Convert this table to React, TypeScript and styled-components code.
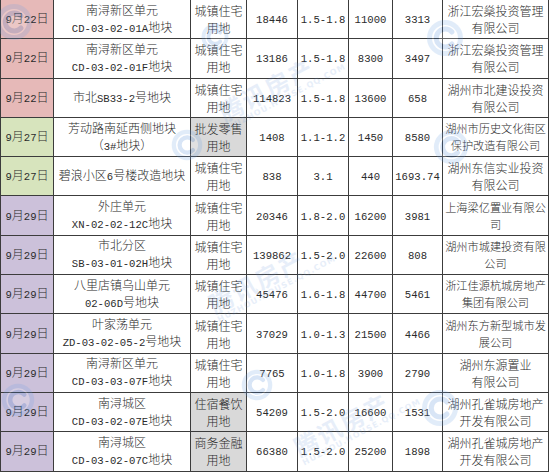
import React from 'react';
import styled, { createGlobalStyle } from 'styled-components';

const GlobalStyle = createGlobalStyle`
  html, body {
    margin: 0;
    padding: 0;
    background: #fff;
  }
  body {
    font-family: "Noto Sans CJK SC", "DejaVu Sans", sans-serif;
  }
`;

type Group = 'pink' | 'green' | 'purple';

const groupColors: Record<Group, string> = {
  pink: '#e6b9b8',
  green: '#d7e4bd',
  purple: '#ccc1da',
};

interface LandRow {
  date: string;
  group: Group;
  plot: string[];
  use: string[];
  useShaded?: boolean;
  area: string;
  ratio: string;
  price: string;
  unit: string;
  buyer: string[];
  tight?: boolean;
}

const rows: LandRow[] = [
  { date: '9月22日', group: 'pink', plot: ['南浔新区单元', 'CD-03-02-01A地块'], use: ['城镇住宅', '用地'], area: '18446', ratio: '1.5-1.8', price: '11000', unit: '3313', buyer: ['浙江宏燊投资管理', '有限公司'] },
  { date: '9月22日', group: 'pink', plot: ['南浔新区单元', 'CD-03-02-01F地块'], use: ['城镇住宅', '用地'], area: '13186', ratio: '1.5-1.8', price: '8300', unit: '3497', buyer: ['浙江宏燊投资管理', '有限公司'] },
  { date: '9月22日', group: 'pink', plot: ['市北SB33-2号地块'], use: ['城镇住宅', '用地'], area: '114823', ratio: '1.5-1.8', price: '13600', unit: '658', buyer: ['湖州市北建设投资', '有限公司'] },
  { date: '9月27日', group: 'green', plot: ['芳动路南延西侧地块', '（3#地块）'], use: ['批发零售', '用地'], useShaded: true, area: '1408', ratio: '1.1-1.2', price: '1450', unit: '8580', buyer: ['湖州市历史文化街区', '保护改造有限公司'], tight: true },
  { date: '9月27日', group: 'green', plot: ['碧浪小区6号楼改造地块'], use: ['城镇住宅', '用地'], area: '838', ratio: '3.1', price: '440', unit: '1693.74', buyer: ['湖州东信实业投资', '有限公司'] },
  { date: '9月29日', group: 'purple', plot: ['外庄单元', 'XN-02-02-12C地块'], use: ['城镇住宅', '用地'], area: '20346', ratio: '1.8-2.0', price: '16200', unit: '3981', buyer: ['上海梁亿置业有限公', '司'], tight: true },
  { date: '9月29日', group: 'purple', plot: ['市北分区', 'SB-03-01-02H地块'], use: ['城镇住宅', '用地'], area: '139862', ratio: '1.5-2.0', price: '22600', unit: '808', buyer: ['湖州市城建投资有限', '公司'], tight: true },
  { date: '9月29日', group: 'purple', plot: ['八里店镇乌山单元', '02-06D号地块'], use: ['城镇住宅', '用地'], area: '45476', ratio: '1.6-1.8', price: '44700', unit: '5461', buyer: ['浙江佳源杭城房地产', '集团有限公司'], tight: true },
  { date: '9月29日', group: 'purple', plot: ['叶家荡单元', 'ZD-03-02-05-2号地块'], use: ['城镇住宅', '用地'], area: '37029', ratio: '1.0-1.3', price: '21500', unit: '4466', buyer: ['湖州东方新型城市发', '展公司'], tight: true },
  { date: '9月29日', group: 'purple', plot: ['南浔新区单元', 'CD-03-03-07F地块'], use: ['城镇住宅', '用地'], area: '7765', ratio: '1.0-1.8', price: '3900', unit: '2790', buyer: ['湖州东源置业', '有限公司'] },
  { date: '9月29日', group: 'purple', plot: ['南浔城区', 'CD-03-02-07E地块'], use: ['住宿餐饮', '用地'], useShaded: true, area: '54209', ratio: '1.5-2.0', price: '16600', unit: '1531', buyer: ['湖州孔雀城房地产', '开发有限公司'] },
  { date: '9月29日', group: 'purple', plot: ['南浔城区', 'CD-03-02-07C地块'], use: ['商务金融', '用地'], useShaded: true, area: '66380', ratio: '1.5-2.0', price: '25200', unit: '1898', buyer: ['湖州孔雀城房地产', '开发有限公司'] },
];

const colWidths = [53, 137, 56, 51, 51, 44, 50, 106];

const Page = styled.div`
  position: relative;
  width: 550px;
  height: 475px;
  overflow: hidden;
  background: #fff;
`;

const Table = styled.table`
  width: 548px;
  table-layout: fixed;
  border-collapse: collapse;
  margin-top: -1px;
`;

const Col = styled.col<{ $w: number }>`
  width: ${(p) => p.$w}px;
`;

const Row = styled.tr`
  height: 39.3px;
`;

const Cell = styled.td<{ $bg?: string; $tight?: boolean }>`
  padding: 0;
  border: 1px solid #3c3c3c;
  background: ${(p) => p.$bg || '#fff'};
  color: #2b2b2b;
  font-weight: 300;
  font-size: ${(p) => (p.$tight ? '11.2px' : '12px')};
  line-height: 17px;
  text-align: center;
  vertical-align: middle;
  white-space: nowrap;
  overflow: hidden;
`;

const Latin = styled.span`
  font-family: "Liberation Mono", "DejaVu Sans Mono", monospace;
  font-weight: 400;
  font-size: 10.6px;
`;

const Line = styled.div``;

const Watermarks = styled.div`
  position: absolute;
  inset: 0;
  pointer-events: none;
`;

const Logo = styled.div<{ $x: number; $y: number; $s: number }>`
  position: absolute;
  left: ${(p) => p.$x}px;
  top: ${(p) => p.$y}px;
  width: ${(p) => p.$s}px;
  height: ${(p) => p.$s}px;
  opacity: 0.2;
`;

const Stamp = styled.div<{ $x: number; $y: number }>`
  position: absolute;
  left: ${(p) => p.$x}px;
  top: ${(p) => p.$y}px;
  transform: rotate(-28deg);
  color: #5b8fd6;
  opacity: 0.14;
  font-family: "Noto Sans CJK SC", sans-serif;
  font-weight: 700;
  font-size: 24px;
  line-height: 24px;
  letter-spacing: 2px;
  white-space: nowrap;
`;

const StampSub = styled.div`
  font-family: "DejaVu Sans", sans-serif;
  font-size: 8px;
  line-height: 10px;
  letter-spacing: 1px;
  font-weight: 700;
`;

const MixedText = ({ text }: { text: string }) => {
  const parts = text.split(/([\u0000-\u00ff]+)/).filter(Boolean);
  return (
    <>
      {parts.map((p, i) =>
        /^[\u0000-\u00ff]+$/.test(p) ? <Latin key={i}>{p}</Latin> : <React.Fragment key={i}>{p}</React.Fragment>
      )}
    </>
  );
};

const Lines = ({ lines }: { lines: string[] }) => (
  <>
    {lines.map((l, i) => (
      <Line key={i}>
        <MixedText text={l} />
      </Line>
    ))}
  </>
);

const LogoMark = () => (
  <svg viewBox="0 0 40 40" width="100%" height="100%">
    <circle cx="20" cy="20" r="18" fill="#6fa3e6" />
    <circle cx="20" cy="20" r="13" fill="#fff" />
    <path d="M27 14 A9 9 0 1 0 27 26" fill="none" stroke="#3f7fd4" strokeWidth="5" strokeLinecap="round" />
  </svg>
);

const logos = [
  { x: -6, y: 2, s: 40 },
  { x: 200, y: 22, s: 30 },
  { x: 425, y: 18, s: 40 },
  { x: 170, y: 128, s: 34 },
  { x: 432, y: 128, s: 38 },
  { x: 240, y: 368, s: 34 },
  { x: 0, y: 382, s: 36 },
  { x: 420, y: 388, s: 40 },
];

const stamps = [
  { x: 215, y: 70 },
  { x: 205, y: 262 },
  { x: 290, y: 405 },
];

export default function App() {
  return (
    <Page>
      <GlobalStyle />
      <Table>
        <colgroup>
          {colWidths.map((w, i) => (
            <Col key={i} $w={w} />
          ))}
        </colgroup>
        <tbody>
          {rows.map((r, i) => (
            <Row key={i}>
              <Cell $bg={groupColors[r.group]}>
                <MixedText text={r.date} />
              </Cell>
              <Cell>
                <Lines lines={r.plot} />
              </Cell>
              <Cell $bg={r.useShaded ? '#d9d9d9' : undefined}>
                <Lines lines={r.use} />
              </Cell>
              <Cell>
                <Latin>{r.area}</Latin>
              </Cell>
              <Cell>
                <Latin>{r.ratio}</Latin>
              </Cell>
              <Cell>
                <Latin>{r.price}</Latin>
              </Cell>
              <Cell>
                <Latin>{r.unit}</Latin>
              </Cell>
              <Cell $tight={r.tight}>
                <Lines lines={r.buyer} />
              </Cell>
            </Row>
          ))}
        </tbody>
      </Table>
      <Watermarks>
        {logos.map((l, i) => (
          <Logo key={i} $x={l.x} $y={l.y} $s={l.s}>
            <LogoMark />
          </Logo>
        ))}
        {stamps.map((s, i) => (
          <Stamp key={i} $x={s.x} $y={s.y}>
            腾讯房产
            <StampSub>HUZHOU.HOUSE.QQ.COM</StampSub>
          </Stamp>
        ))}
      </Watermarks>
    </Page>
  );
}
